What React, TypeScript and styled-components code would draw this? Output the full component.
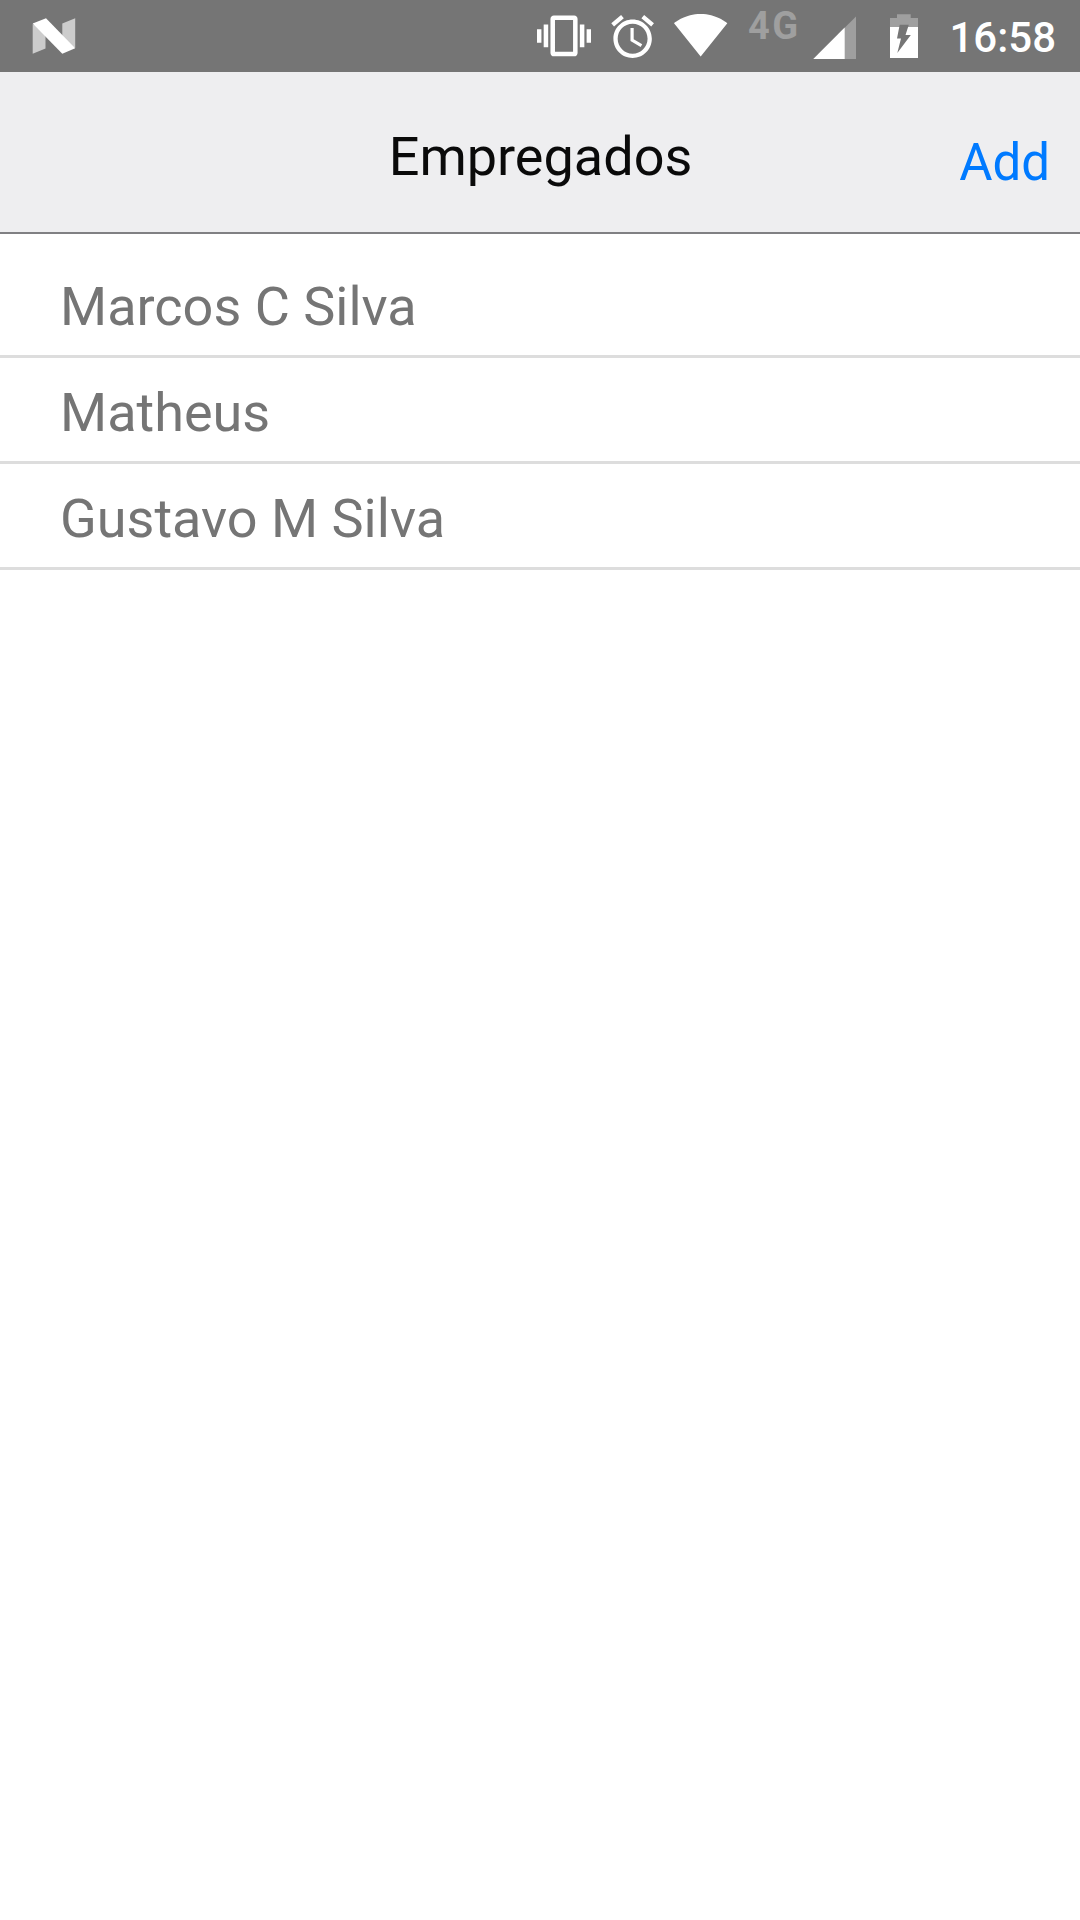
import React from "react";
import styled, { createGlobalStyle } from "styled-components";

const GlobalStyle = createGlobalStyle`
  html, body { margin: 0; padding: 0; background: #ffffff; }
  body { font-family: Roboto, "Noto Sans", sans-serif; }
`;

const Screen = styled.div`
  display: flex;
  flex-direction: column;
  width: 1080px;
  height: 1920px;
  overflow: hidden;
  background: #ffffff;
`;

const StatusBar = styled.header`
  display: flex;
  align-items: flex-start;
  justify-content: space-between;
  height: 72px;
  box-sizing: border-box;
  padding: 0 24px 0 32px;
  background: #757575;
`;

const StatusIcons = styled.div`
  display: flex;
  align-items: flex-start;
`;

const Glyph = styled.svg<{ $gap?: number }>`
  display: block;
  flex: none;
  height: 72px;
  margin-left: ${(p) => p.$gap ?? 0}px;
  fill: #ffffff;
`;

const Network = styled.span`
  width: 51px;
  margin: 4px 0 0 20px;
  font-size: 38px;
  line-height: 44px;
  font-weight: 700;
  letter-spacing: 2.4px;
  white-space: nowrap;
  color: #9f9f9f;
`;

const Clock = styled.time`
  width: 108px;
  margin: 13px 0 0 30px;
  font-size: 42px;
  line-height: 50px;
  font-weight: 500;
  text-align: right;
  white-space: nowrap;
  color: #ffffff;
`;

const NavBar = styled.nav`
  display: grid;
  grid-template-columns: 1fr auto 1fr;
  align-items: start;
  height: 162px;
  box-sizing: border-box;
  padding: 0 30px;
  background: #eeeef0;
  border-bottom: 2px solid #808083;
`;

const Title = styled.h1`
  grid-column: 2;
  margin: 53px 0 0 1px;
  font-size: 54px;
  line-height: 64px;
  font-weight: 400;
  color: #0a0a0a;
`;

const AddButton = styled.button`
  justify-self: end;
  margin: 61px 0 0;
  padding: 0;
  border: 0;
  background: none;
  font: 400 51px/60px Roboto, "Noto Sans", sans-serif;
  color: #007aff;
`;

const List = styled.ul`
  margin: 0;
  padding: 18px 0 0;
  list-style: none;
`;

const Row = styled.li`
  padding: 23px 60px 16px;
  height: 64px;
  border-bottom: 3px solid #dddddd;
  font-size: 54px;
  line-height: 64px;
  color: #757575;
`;

const employees = ["Marcos C Silva", "Matheus", "Gustavo M Silva"];

const NougatIcon = () => (
  <Glyph width="44" viewBox="32 0 44 72">
    <path fill="#cccccc" d="M32.7 24L45.5 30V48.5L32.7 53.7zM62.3 23.5L75.2 18.3V48L62.3 42z" />
    <path d="M32.7 23.5L46 18.3L75.2 48.3L62.3 53.7z" />
  </Glyph>
);

const VibrateIcon = () => (
  <Glyph width="54" viewBox="537 0 54 72">
    <path
      transform="translate(536.9 8.7) scale(2.26 2.27)"
      d="M0 15h2V9H0v6zm3 2h2V7H3v10zm19-8v6h2V9h-2zm-3 8h2V7h-2v10zM16.5 3h-9C6.67 3 6 3.67 6 4.5v15c0 .83.67 1.5 1.5 1.5h9c.83 0 1.5-.67 1.5-1.5v-15c0-.83-.67-1.5-1.5-1.5zM16 19H8V5h8v14z"
    />
  </Glyph>
);

const AlarmIcon = () => (
  <Glyph $gap={20} width="43" viewBox="611 0 43 72">
    <path
      transform="translate(607 11) scale(2.135)"
      d="M22 5.72l-4.6-3.86-1.29 1.53 4.6 3.86L22 5.72zM7.88 3.39L6.6 1.86 2 5.71l1.29 1.53 4.59-3.85zM12.5 8H11v6l4.75 2.85.75-1.23-4-2.37V8zM12 4c-4.97 0-9 4.03-9 9s4.02 9 9 9c4.97 0 9-4.03 9-9s-4.03-9-9-9zm0 16c-3.87 0-7-3.13-7-7s3.13-7 7-7 7 3.13 7 7-3.13 7-7 7z"
    />
  </Glyph>
);

const WifiIcon = () => (
  <Glyph $gap={19} width="55" viewBox="673 0 55 72">
    <path
      transform="translate(673.2 7.2) scale(2.29)"
      d="M12.01 21.49L23.64 7c-.45-.34-4.93-4-11.64-4C5.28 3 .81 6.66.36 7l11.63 14.49.01.01.01-.01z"
    />
  </Glyph>
);

const SignalIcon = () => (
  <Glyph $gap={14} width="43" viewBox="813 0 43 72">
    <path fill="#9f9f9f" d="M813.3 59L856 16.5V59z" />
    <path d="M813.3 59L844.7 27.6V59z" />
  </Glyph>
);

const BatteryIcon = () => (
  <Glyph $gap={34} width="28" viewBox="890 0 28 72">
    <path fill="#9f9f9f" d="M897 14.3H910.7V18H918V27H890V18H897z" />
    <path d="M890 27H918V58H890z" />
    <path fill="#757575" d="M899.7 24.8H908.8L905.5 35H910.8L897.3 53L901 38.6H897z" />
  </Glyph>
);

export default function App() {
  return (
    <>
      <GlobalStyle />
      <Screen>
        <StatusBar>
          <NougatIcon />
          <StatusIcons>
            <VibrateIcon />
            <AlarmIcon />
            <WifiIcon />
            <Network>4G</Network>
            <SignalIcon />
            <BatteryIcon />
            <Clock>16:58</Clock>
          </StatusIcons>
        </StatusBar>
        <NavBar>
          <Title>Empregados</Title>
          <AddButton type="button">Add</AddButton>
        </NavBar>
        <List>
          {employees.map((name) => (
            <Row key={name}>{name}</Row>
          ))}
        </List>
      </Screen>
    </>
  );
}
